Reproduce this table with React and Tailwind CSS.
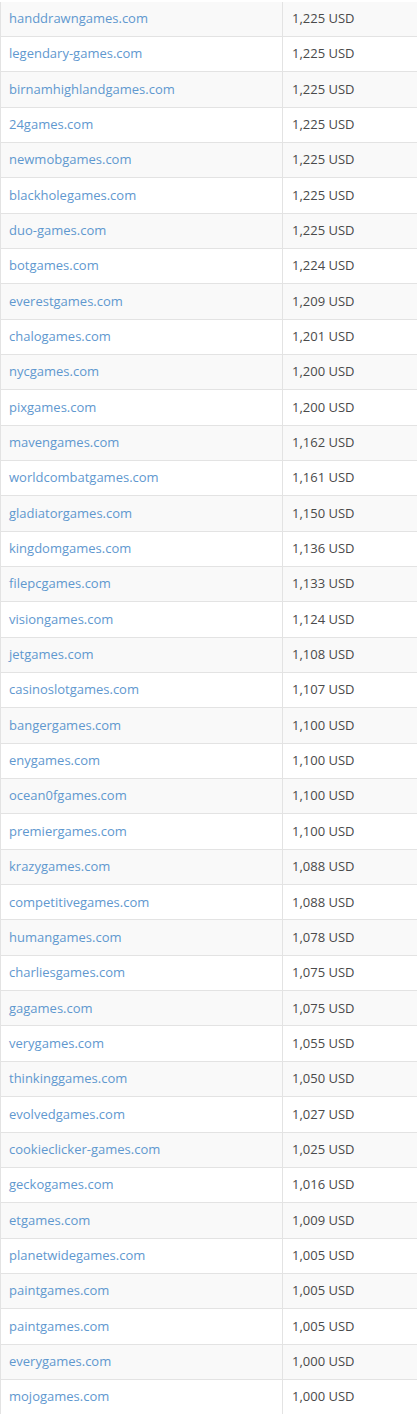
import React from "react";

const rows = [
  ["handdrawngames.com", "1,225"],
  ["legendary-games.com", "1,225"],
  ["birnamhighlandgames.com", "1,225"],
  ["24games.com", "1,225"],
  ["newmobgames.com", "1,225"],
  ["blackholegames.com", "1,225"],
  ["duo-games.com", "1,225"],
  ["botgames.com", "1,224"],
  ["everestgames.com", "1,209"],
  ["chalogames.com", "1,201"],
  ["nycgames.com", "1,200"],
  ["pixgames.com", "1,200"],
  ["mavengames.com", "1,162"],
  ["worldcombatgames.com", "1,161"],
  ["gladiatorgames.com", "1,150"],
  ["kingdomgames.com", "1,136"],
  ["filepcgames.com", "1,133"],
  ["visiongames.com", "1,124"],
  ["jetgames.com", "1,108"],
  ["casinoslotgames.com", "1,107"],
  ["bangergames.com", "1,100"],
  ["enygames.com", "1,100"],
  ["ocean0fgames.com", "1,100"],
  ["premiergames.com", "1,100"],
  ["krazygames.com", "1,088"],
  ["competitivegames.com", "1,088"],
  ["humangames.com", "1,078"],
  ["charliesgames.com", "1,075"],
  ["gagames.com", "1,075"],
  ["verygames.com", "1,055"],
  ["thinkinggames.com", "1,050"],
  ["evolvedgames.com", "1,027"],
  ["cookieclicker-games.com", "1,025"],
  ["geckogames.com", "1,016"],
  ["etgames.com", "1,009"],
  ["planetwidegames.com", "1,005"],
  ["paintgames.com", "1,005"],
  ["paintgames.com", "1,005"],
  ["everygames.com", "1,000"],
  ["mojogames.com", "1,000"],
];

export default function App() {
  return (
    <div className="w-[417px] h-[1414px] overflow-hidden bg-white pt-[1.5px] font-['Open_Sans',sans-serif] text-[13px]">
      {rows.map(([domain, price], i) => (
        <div
          key={i}
          className={`flex h-[35.35px] border-b border-[#e3e3e3] ${
            i % 2 === 0 ? "bg-[#f9f9f9]" : "bg-white"
          }`}
        >
          <div className="w-[283px] shrink-0 flex items-center pl-[8px] border-l border-r border-[#e3e3e3]">
            <a href="#" className="text-[#5f98cf] no-underline">
              {domain}
            </a>
          </div>
          <div className="flex-1 flex items-center pl-[9px] text-[#4a4a4a]">
            {price} USD
          </div>
        </div>
      ))}
    </div>
  );
}
